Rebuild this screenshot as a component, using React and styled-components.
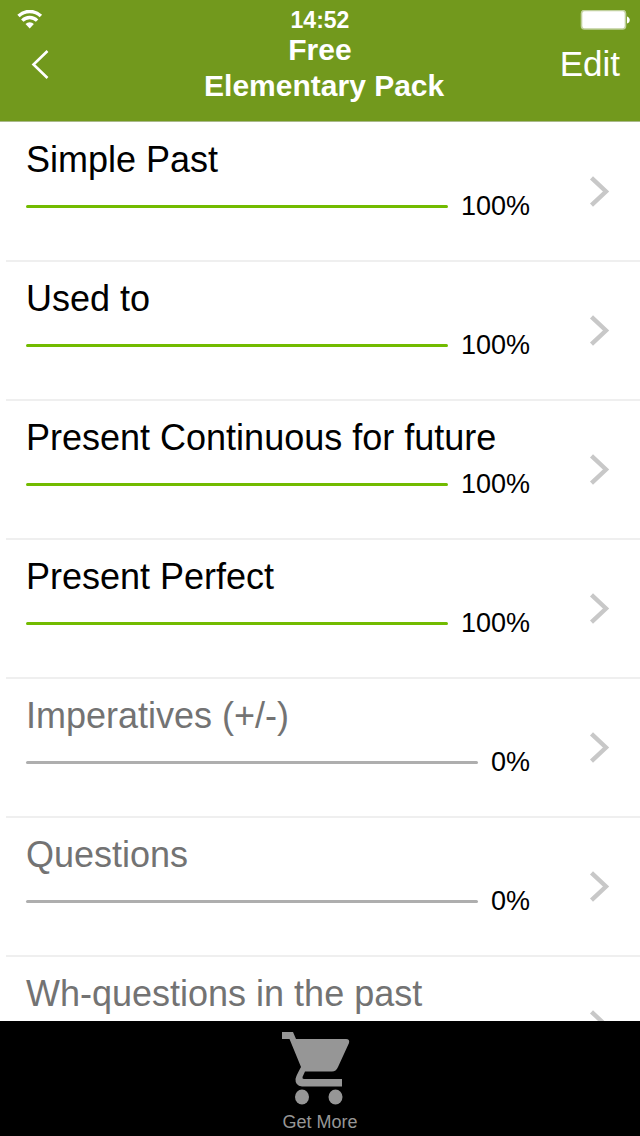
import React from "react";
import styled, { createGlobalStyle } from "styled-components";

const lessons = [
    { title: "Simple Past", progress: 100 },
    { title: "Used to", progress: 100 },
    { title: "Present Continuous for future", progress: 100 },
    { title: "Present Perfect", progress: 100 },
    { title: "Imperatives (+/-)", progress: 0 },
    { title: "Questions", progress: 0 },
    { title: "Wh-questions in the past", progress: 0 }
];

const GlobalStyle = createGlobalStyle`
  * {
    box-sizing: border-box;
  }

  body {
    margin: 0;
    background-color: #fff;
    font-family: "Liberation Sans", Arial, sans-serif;
  }
`;

const Screen = styled.div`
  display: flex;
  flex-direction: column;
  height: 100vh;
`;

const Header = styled.header`
  flex: none;
  color: #fff;
  background-color: #72991d;
  border-bottom: 1px solid #a9b98a;
`;

const StatusBar = styled.div`
  display: grid;
  grid-template-columns: 1fr auto 1fr;
  align-items: center;
  height: 32px;
  padding: 6px 10px 0;

  svg:last-child {
    justify-self: end;
  }
`;

const Clock = styled.span`
  font-size: 23px;
  font-weight: bold;
  line-height: 28px;
`;

const NavBar = styled.div`
  display: grid;
  grid-template-columns: 1fr auto 1fr;
  height: 89px;
  padding: 0 20px;
`;

const Title = styled.h1`
  margin: 0;
  font-size: 30px;
  font-weight: bold;
  line-height: 36px;
  text-align: center;
`;

const NavButton = styled.button`
  justify-self: ${(props) => (props.$side === "right" ? "end" : "start")};
  height: 64px;
  padding: 0;
  border: none;
  background: none;
  color: inherit;
  font-family: inherit;
  font-size: 35px;
  cursor: pointer;

  svg {
    display: block;
    margin-left: 8px;
  }
`;

const LessonList = styled.ul`
  flex: 1;
  min-height: 0;
  margin: 0;
  padding: 1px 0 0 6px;
  overflow-y: auto;
  scrollbar-width: none;
  list-style: none;
`;

const LessonRow = styled.a`
  display: flex;
  align-items: center;
  height: 139px;
  padding: 0 30px 0 20px;
  border-bottom: 2px solid #efefef;
  color: ${(props) => (props.$started ? "#000" : "#737373")};
  text-decoration: none;
`;

const LessonBody = styled.div`
  flex: 1;
  align-self: flex-start;
  padding-top: 15px;
  margin-right: 59px;
`;

const LessonTitle = styled.div`
  font-size: 36px;
  line-height: 44px;
  white-space: nowrap;
`;

const ProgressLine = styled.div`
  display: flex;
  align-items: center;
  gap: 13px;
  height: 48px;
`;

const Track = styled.div`
  flex: 1;
  height: 3px;
  border-radius: 2px;
  overflow: hidden;
  background-color: #aeaeae;
`;

const Fill = styled.div`
  height: 100%;
  background-color: #72bb00;
`;

const Percent = styled.span`
  color: #000;
  font-size: 27px;
`;

const TabBar = styled.nav`
  display: flex;
  flex: none;
  justify-content: center;
  height: 115px;
  background-color: #000;
`;

const TabButton = styled.button`
  display: flex;
  flex-direction: column;
  align-items: center;
  padding: 10px 0 0;
  border: none;
  background: none;
  color: #969696;
  font-family: inherit;
  font-size: 18px;
  line-height: 20px;
  cursor: pointer;

  svg {
    margin: 0 8px 6px 0;
  }
`;

const WifiIcon = () => (
    <svg width="34" height="20" viewBox="-6 2 34 20" fill="none" stroke="#fff" strokeWidth="3.4" aria-hidden="true">
        <path d="M2.5 8 A16 16 0 0 1 24.9 8" />
        <path d="M6.3 12.6 A10.3 10.3 0 0 1 21.1 12.6" />
        <path d="M9.5 16 A6 6 0 0 1 17.9 16 L13.7 20.6 Z" fill="#fff" stroke="none" />
    </svg>
);

const BatteryIcon = () => (
    <svg width="50" height="20" viewBox="0 0 50 20" aria-hidden="true">
        <rect x="1.5" y="0.5" width="44" height="18.5" rx="3" fill="#fff" stroke="#c0d09c" strokeWidth="1.6" />
        <path d="M47 6.5 C50.7 7.5 50.7 12.5 47 13.5 Z" fill="#fff" />
    </svg>
);

const BackIcon = () => (
    <svg width="24" height="30" viewBox="0 0 24 30" fill="none" stroke="#fff" strokeWidth="2.6" aria-hidden="true">
        <path d="M19.5 2 L5.5 15.5 L19.5 29" />
    </svg>
);

const ChevronIcon = () => (
    <svg width="21" height="32" viewBox="0 0 21 32" fill="none" stroke="#c8c8c8" strokeWidth="4.4" aria-hidden="true">
        <path d="M2.5 1.8 L17 15.5 L2.5 29.2" />
    </svg>
);

const CartIcon = () => (
    <svg width="68" height="75" viewBox="0 0 68 75" fill="#969696" aria-hidden="true">
        <path d="M0 1 H11 L14 8 H64 Q68 8 67 12 L56 36 Q54 40.5 50 40.5 H23 L20.5 46 Q20 48 22 48 H60 V55.5 H20 Q13 54.5 13.5 48 Q14 45 19 36 L7.5 8 H0 Z" />
        <ellipse cx="20" cy="66" rx="7" ry="7.6" />
        <ellipse cx="53.5" cy="66" rx="7" ry="7.6" />
    </svg>
);

const Lesson = ({ title, progress }) => (
    <li>
        <LessonRow href="#" $started={progress > 0}>
            <LessonBody>
                <LessonTitle>{title}</LessonTitle>
                <ProgressLine>
                    <Track>
                        <Fill style={{ width: `${progress}%` }} />
                    </Track>
                    <Percent>{progress}%</Percent>
                </ProgressLine>
            </LessonBody>
            <ChevronIcon />
        </LessonRow>
    </li>
);

const App = () => {
    return (
        <Screen>
            <GlobalStyle />
            <Header>
                <StatusBar>
                    <WifiIcon />
                    <Clock>14:52</Clock>
                    <BatteryIcon />
                </StatusBar>
                <NavBar>
                    <NavButton aria-label="Back">
                        <BackIcon />
                    </NavButton>
                    <Title>
                        Free
                        <br />
                        &nbsp;Elementary Pack
                    </Title>
                    <NavButton $side="right">Edit</NavButton>
                </NavBar>
            </Header>
            <LessonList>
                {lessons.map((lesson) => (
                    <Lesson key={lesson.title} {...lesson} />
                ))}
            </LessonList>
            <TabBar>
                <TabButton>
                    <CartIcon />
                    Get More
                </TabButton>
            </TabBar>
        </Screen>
    );
};

export default App;
